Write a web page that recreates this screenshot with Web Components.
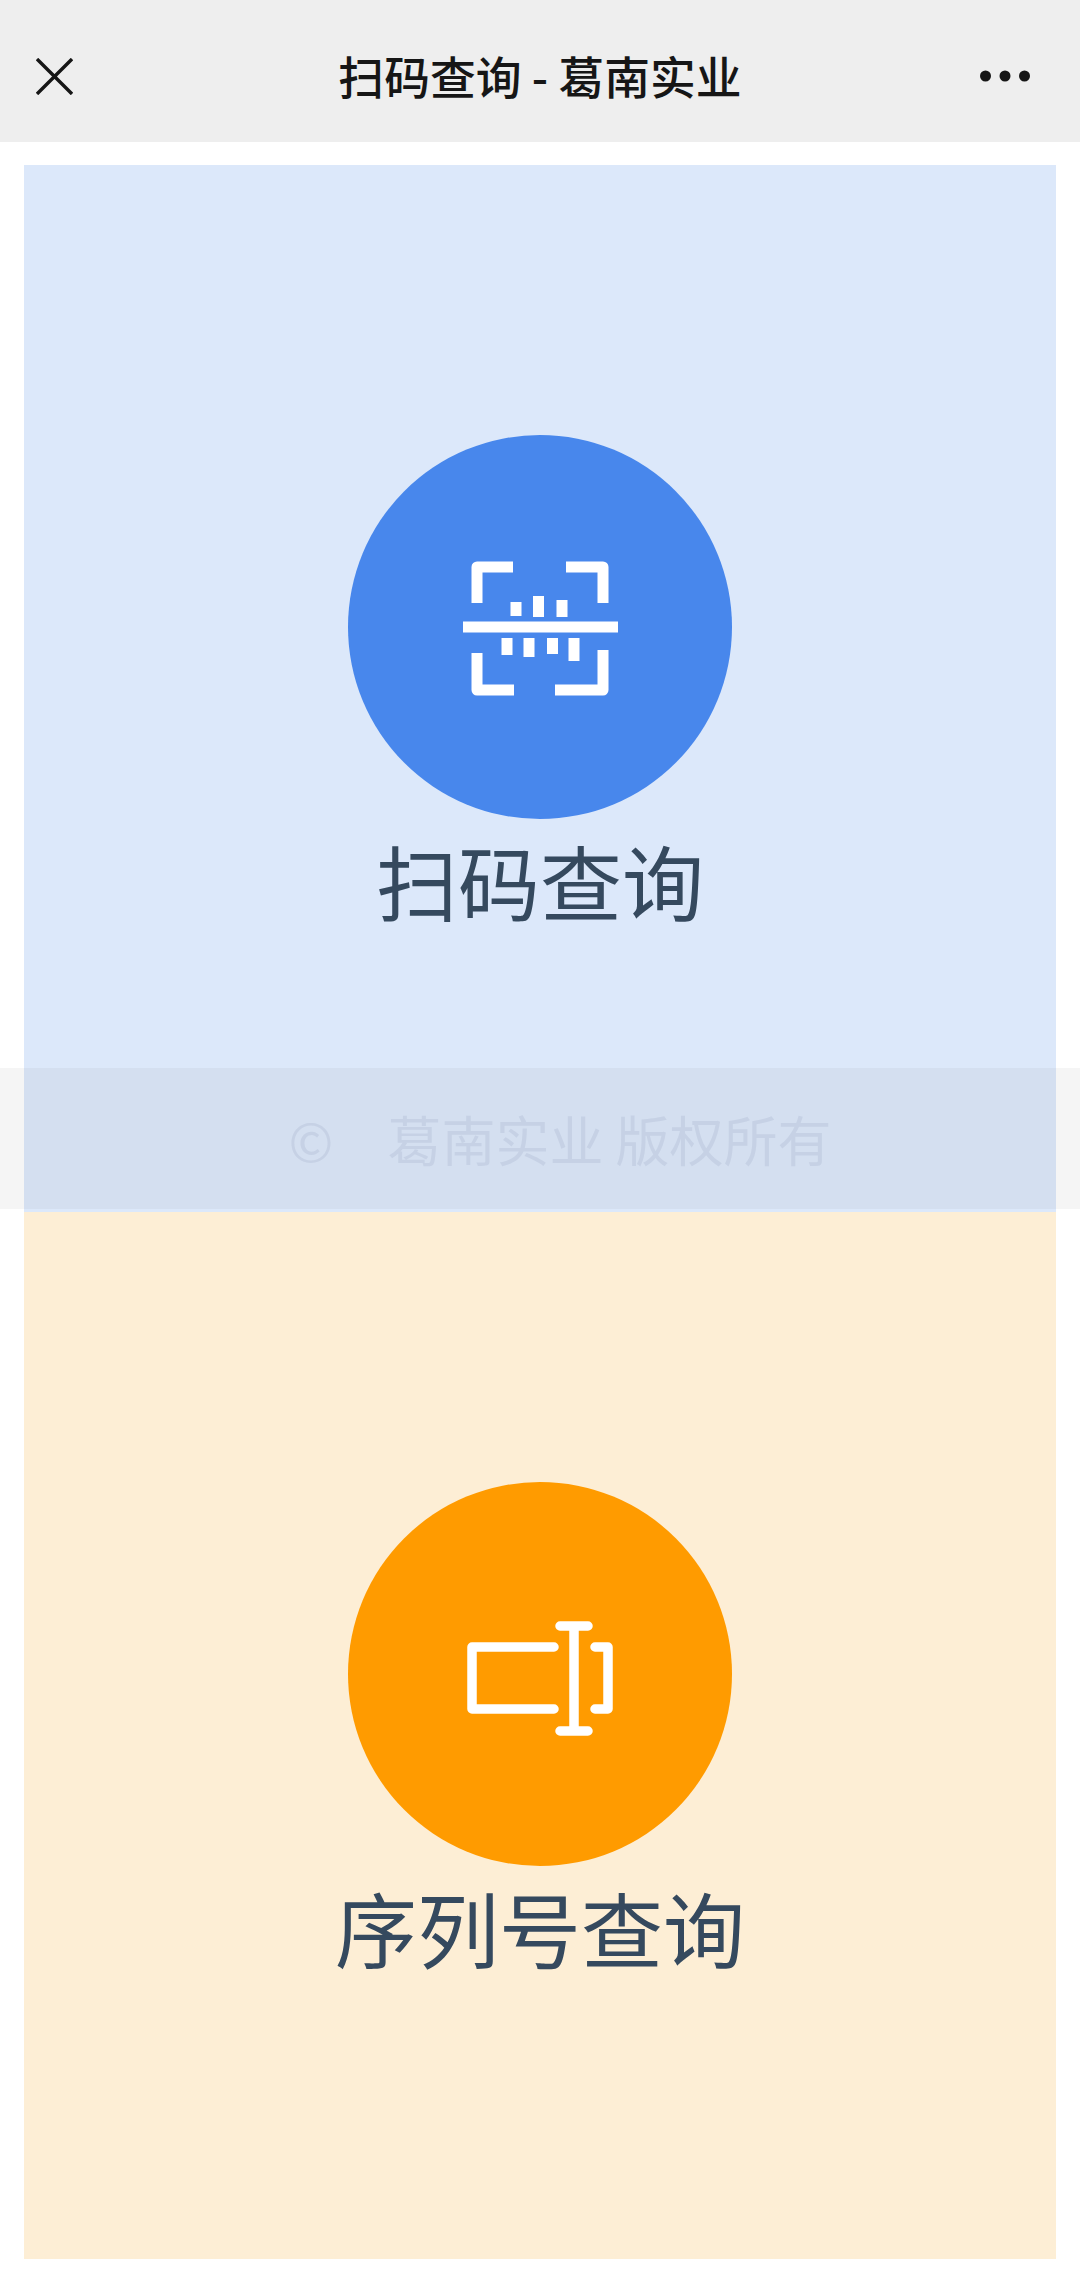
<!DOCTYPE html>
<html lang="zh"><head><meta charset="utf-8"><title>扫码查询 - 葛南实业</title>
<style>html,body{margin:0;background:#fff;font-family:"Noto Sans CJK SC","Noto Sans",sans-serif}</style>
</head><body>
<app-page>
  <nav-bar slot="bar" title-text="扫码查询 - 葛南实业"></nav-bar>
  <query-card tone="blue" label="扫码查询"><svg viewBox="348 435 384 384" width="384" height="384" fill="none" stroke="#fff" stroke-width="11" stroke-linejoin="round">
    <path d="M513 567H477V603M566 567H603V603M477 653V690H514M555 690H603V650"/>
    <g fill="#fff" stroke="none"><rect x="463" y="621.500" width="155" height="11"/><rect x="510.500" y="602" width="11" height="14"/><rect x="533" y="596" width="11" height="21"/><rect x="556.500" y="600" width="11" height="17"/><rect x="501.500" y="638" width="11" height="17"/><rect x="523.500" y="638" width="11" height="19"/><rect x="547" y="638" width="11" height="16"/><rect x="568.500" y="638" width="11" height="23"/></g></svg></query-card>
  <query-card tone="orange" label="序列号查询"><svg viewBox="348 1482 384 384" width="384" height="384" fill="none" stroke="#fff" stroke-width="9.500" stroke-linecap="round" stroke-linejoin="round">
    <path d="M554 1647H472V1709H554M574 1626V1731M560 1626H588M560 1731H588M595 1647H608V1709H595"/></svg></query-card>
  <copy-bar slot="over">©　葛南实业 版权所有</copy-bar>
</app-page>
<script>
function def(name, css, html, init){
  customElements.define(name, class extends HTMLElement{
    connectedCallback(){
      if(this.shadowRoot) return;
      const r=this.attachShadow({mode:"open"});
      r.innerHTML=`<style>${css}</style>${html}`;
      if(init) init(this,r);
    }
  });
}
def("app-page",`:host{display:block;position:relative;width:1080px;height:2276px;overflow:hidden}
  .main{display:flex;flex-direction:column;padding:23px 24px 0}`,
  `<slot name="bar"></slot><div class="main"><slot></slot></div><slot name="over"></slot>`);
def("nav-bar",`:host{display:flex;align-items:center;justify-content:space-between;height:142px;background:#eeeeee;padding:0 50px 0 36px;box-sizing:border-box;color:#161616}
  .t{font-size:45.800px;font-weight:500;line-height:60px;position:absolute;left:0;right:0;top:45px;text-align:center}
  svg{display:block}`,
  `<svg width="37" height="37" viewBox="0 0 37 37" fill="none" stroke="#161616" stroke-width="3.400" style="margin-top:10px"><path d="M1 1L36 36M36 1L1 36"/></svg>
   <span class="t"></span>
   <svg width="50" height="12" viewBox="0 0 50 12" fill="#161616" style="margin-top:10px"><circle cx="5.500" cy="6" r="5.500"/><circle cx="25" cy="6" r="5.500"/><circle cx="44.500" cy="6" r="5.500"/></svg>`,
  (h,r)=>{r.querySelector(".t").textContent=h.getAttribute("title-text")});
def("query-card",`:host{display:flex;flex-direction:column;align-items:center;height:1047px;padding-top:270px;box-sizing:border-box;color:#35495e}
  :host([tone=blue]){background:#dce8fa;--c:#4887ec}
  :host([tone=orange]){background:#fdeed5;--c:#ff9b00}
  .c{width:384px;height:384px;border-radius:50%;background:var(--c);display:flex}
  .l{font-size:82px;line-height:122px}`,
  `<div class="c"><slot></slot></div><div class="l"></div>`,
  (h,r)=>{r.querySelector(".l").textContent=h.getAttribute("label")});
def("copy-bar",`:host{display:flex;justify-content:center;align-items:center;position:absolute;left:0;right:0;top:1068px;height:141px;box-sizing:border-box;padding-left:40px;background:rgba(128,128,128,.08);color:rgba(110,130,160,.14);font-size:54px;line-height:1}`,
  `<slot></slot>`);
</script>
</body></html>
